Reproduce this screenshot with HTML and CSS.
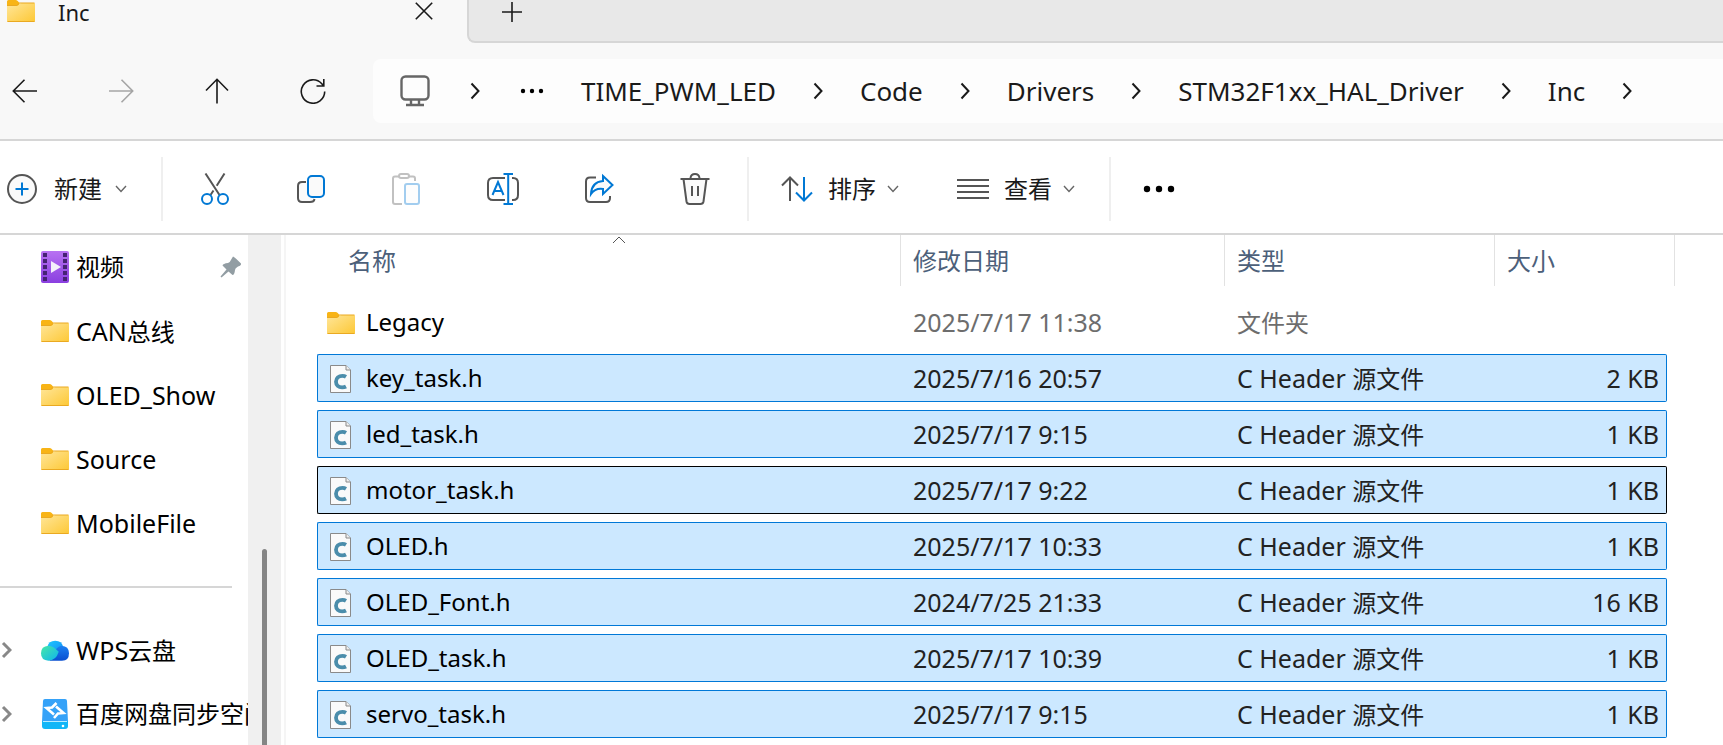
FILE: index.html
```html
<!DOCTYPE html>
<html lang="zh-CN">
<head>
<meta charset="utf-8">
<title>Inc</title>
<link rel="stylesheet" href="styles.css">
</head>
<body>
<svg class="defs" aria-hidden="true">
  <defs>
    <linearGradient id="g-folder" x1="0" y1="0" x2="1" y2="1"><stop offset="0" stop-color="#ffe69a"/><stop offset="1" stop-color="#fdc835"/></linearGradient>
    <linearGradient id="g-video" x1="0" y1="0" x2="0" y2="1"><stop offset="0" stop-color="#b872f2"/><stop offset="1" stop-color="#8a3fe0"/></linearGradient>
    <linearGradient id="g-cloud-l" x1="0" y1="0" x2="1" y2="1"><stop offset="0" stop-color="#45e8a8"/><stop offset="1" stop-color="#0fb4ee"/></linearGradient>
    <linearGradient id="g-cloud-t" x1="0" y1="0" x2="1" y2="1"><stop offset="0" stop-color="#1cc8ff"/><stop offset="1" stop-color="#1487f5"/></linearGradient>
    <linearGradient id="g-cloud-r" x1="0" y1="0" x2="0" y2="1"><stop offset="0" stop-color="#1a80f2"/><stop offset="1" stop-color="#0a4fd0"/></linearGradient>
    <symbol id="folder" viewBox="0 0 28 22">
      <path d="M0 1.500Q0 0 1.500 0H8.500Q9.800 0 10.700 1L12.500 3V8H0Z" fill="#f8b416"/>
      <path d="M0 6H9.500Q10.500 6 11.300 5.200L12.800 3.700Q13.500 3 14.500 3H27Q28 3 28 4V21Q28 22 27 22H1Q0 22 0 21Z" fill="url(#g-folder)"/>
      <path d="M0 5.500H9.500L12.500 3H27.500M.500 21.500H27.500" fill="none" stroke="#eaa921"/>
    </symbol>
    <symbol id="cfile" viewBox="0 0 22 28">
      <path d="M.500 .500H16L20.500 5V27.500H.500Z" fill="#fafafa" stroke="#8a8a8a"/>
      <path d="M16 .500V5H20.500" fill="#eee" stroke="#8a8a8a"/>
      <path d="M16 11.800Q14.600 10.900 12.500 10.900C8.600 10.900 6 13.300 6 16.700C6 20.200 8.400 22.300 12.100 22.300Q14.600 22.300 16 21.500" fill="none" stroke="#4b8dab" stroke-width="3.800"/>
    </symbol>
    <symbol id="next" viewBox="0 0 10 18"><path d="M1.500 1.500L8.500 9L1.500 16.500" fill="none" stroke="currentColor" stroke-width="2"/></symbol>
    <symbol id="expand" viewBox="0 0 11 18"><path d="M2 2L9 9L2 16" fill="none" stroke="#888" stroke-width="3"/></symbol>
    <symbol id="down" viewBox="0 0 12 8"><path d="M1 1L6 6.500L11 1" fill="none" stroke="#666" stroke-width="1.400"/></symbol>
  </defs>
</svg>
<div class="window">
  <header class="tabs">
    <div class="tab">
      <svg class="i-folder"><use href="#folder"/></svg>
      <span class="tab-title">Inc</span>
      <button class="plain" aria-label="关闭"><svg width="18" height="18" viewBox="0 0 18 18"><path d="M.800 .800L17.200 17.200M17.200 .800L.800 17.200" class="ink"/></svg></button>
    </div>
    <div class="strip">
      <button class="plain" aria-label="新建标签页"><svg width="20" height="20" viewBox="0 0 20 20"><path d="M10 0V20M0 10H20" class="ink"/></svg></button>
    </div>
  </header>

  <nav class="address">
    <div class="history">
      <button class="plain" aria-label="后退"><svg width="26" height="26" viewBox="0 0 26 26"><path d="M25 13H1.500M12.500 1.800L1.300 13L12.500 24.200" class="ink"/></svg></button>
      <button class="plain" aria-label="前进" disabled><svg width="26" height="26" viewBox="0 0 26 26"><path d="M1 13H24.500M13.500 1.800L24.700 13L13.500 24.200" class="ink faded"/></svg></button>
      <button class="plain" aria-label="上移"><svg width="26" height="26" viewBox="0 0 26 26"><path d="M13 25.500V1.500M2 12.500L13 1.300L24 12.500" class="ink"/></svg></button>
      <button class="plain" aria-label="刷新"><svg width="26" height="26" viewBox="0 0 26 26"><path d="M24.700 13.500A11.700 11.700 0 1 1 21.800 5.800L23.500 7.800M23.800 1V8H16.500" class="ink"/></svg></button>
    </div>
    <div class="crumbs">
      <svg class="pc" width="30" height="32" viewBox="0 0 30 32"><rect x="1.500" y="1.500" width="27" height="23" rx="4"/><path d="M11 25V29M19 25V29M6 30H24"/></svg>
      <svg class="next first"><use href="#next"/></svg>
      <button class="plain dots" aria-label="更多路径"><svg width="24" height="6" viewBox="0 0 24 6"><circle cx="3" cy="3" r="2.200"/><circle cx="12" cy="3" r="2.200"/><circle cx="21" cy="3" r="2.200"/></svg></button>
      <a href="#">TIME_PWM_LED</a><svg class="next"><use href="#next"/></svg>
      <a href="#">Code</a><svg class="next"><use href="#next"/></svg>
      <a href="#">Drivers</a><svg class="next"><use href="#next"/></svg>
      <a href="#">STM32F1xx_HAL_Driver</a><svg class="next"><use href="#next"/></svg>
      <a href="#">Inc</a><svg class="next"><use href="#next"/></svg>
    </div>
  </nav>

  <div class="toolbar">
    <button class="tool new"><svg width="30" height="30" viewBox="0 0 30 30"><circle cx="15" cy="15" r="14" class="gray tint"/><path d="M15 8.500V21.500M8.500 15H21.500" class="blue"/></svg>新建<svg class="down"><use href="#down"/></svg></button>
    <div class="group">
      <button class="plain" aria-label="剪切"><svg width="32" height="32" viewBox="0 0 32 32"><path d="M6.500 .500L20.500 22M25.500 .500L17.700 12.800M14.500 17.500L11.500 22" class="gray"/><circle cx="8" cy="26" r="5" class="blue"/><circle cx="24" cy="26" r="5" class="blue"/></svg></button>
      <button class="plain" aria-label="复制"><svg width="32" height="32" viewBox="0 0 32 32"><path d="M11 9H7Q3 9 3 13V25Q3 29 7 29H15Q19 29 19.500 26" class="gray tint"/><rect x="13" y="3" width="16" height="21" rx="4" class="blue tint"/></svg></button>
      <button class="plain" aria-label="粘贴" disabled><svg class="dim" width="32" height="32" viewBox="0 0 32 32"><path d="M9 3.500H5Q3 3.500 3 5.500V29Q3 31 5 31H12M19 3.500H23Q25 3.500 25 5.500V8" class="gray"/><rect x="9" y="1" width="10" height="4" rx="2" class="gray"/><rect x="15" y="11" width="14" height="20" rx="2" class="blue tint"/></svg></button>
      <button class="plain" aria-label="重命名"><svg width="34" height="32" viewBox="0 0 34 32"><path d="M19 5H7Q2 5 2 10V22Q2 27 7 27H19M26 5H27Q32 5 32 10V22Q32 27 27 27H26" class="gray"/><path d="M17.500 1H27M17.500 31H27M22.200 1V31M6.500 22L12 9L17.500 22M8.500 18H15.500" class="blue"/></svg></button>
      <button class="plain" aria-label="共享"><svg width="32" height="32" viewBox="0 0 32 32"><path d="M13 4.500H7Q3 4.500 3 8.500V25Q3 29 7 29H23Q27 29 27 25V23" class="gray"/><path d="M20 3L29.500 12L20 21V16Q12 15 8 21Q8.500 9 20 8Z" class="blue tint"/></svg></button>
      <button class="plain" aria-label="删除"><svg width="32" height="32" viewBox="0 0 32 32"><path d="M4.500 6L7.500 28.500Q8 31 10.500 31H21.500Q24 31 24.500 28.500L27.500 6" class="gray tint"/><path d="M1.500 6H30.500M11.500 5Q12 1 16 1T20.500 5M13 13V23M19 13V23" class="gray"/></svg></button>
    </div>
    <button class="tool"><svg width="32" height="26" viewBox="0 0 32 26"><path d="M9 25V1.500M1 9.500L9 1.500L17 9.500" class="gray"/><path d="M23 1V24.500M15 16.500L23 24.500L31 16.500" class="blue"/></svg>排序<svg class="down"><use href="#down"/></svg></button>
    <button class="tool view"><svg width="32" height="22" viewBox="0 0 32 22"><path d="M0 2H32M0 8H32M0 14H32M0 20H32" class="gray"/></svg>查看<svg class="down"><use href="#down"/></svg></button>
    <button class="plain more" aria-label="查看更多"><svg width="32" height="8" viewBox="0 0 32 8"><circle cx="4" cy="4" r="3.200"/><circle cx="16" cy="4" r="3.200"/><circle cx="28" cy="4" r="3.200"/></svg></button>
  </div>

  <div class="main">
    <aside class="side">
      <ul class="tree">
        <li><a href="#"><svg class="ico" viewBox="0 0 28 32"><rect width="28" height="32" rx="2" fill="url(#g-video)"/><path d="M4 2V32M24 2V32" stroke="#452273" stroke-width="4" stroke-dasharray="4 2"/><path d="M10 10L20 16L10 22Z" fill="#f4f0fa"/></svg><span>视频</span><svg class="pin" viewBox="0 0 22 22"><path d="M13 .500Q14 .500 21 7.500Q21.500 9.500 18 10.500Q15 12 15 14Q14.500 19 12.500 19L8.500 15.500L1.500 21.500L.500 20.500L6.500 13.500L2.500 9.500Q3 7.500 8 7Q10 6.500 11.500 3Z" fill="#929da3"/></svg></a></li>
        <li><a href="#"><svg class="i-folder"><use href="#folder"/></svg><span><span class="latin">CAN</span>总线</span></a></li>
        <li><a href="#"><svg class="i-folder"><use href="#folder"/></svg><span class="latin">OLED_Show</span></a></li>
        <li><a href="#"><svg class="i-folder"><use href="#folder"/></svg><span class="latin">Source</span></a></li>
        <li><a href="#"><svg class="i-folder"><use href="#folder"/></svg><span class="latin">MobileFile</span></a></li>
      </ul>
      <hr class="rule">
      <ul class="tree">
        <li><a href="#"><svg class="expand"><use href="#expand"/></svg><svg class="ico" viewBox="0 0 30 32"><path d="M6.500 13A9 9 0 0 1 24 13L20 22H8Z" fill="url(#g-cloud-t)"/><path d="M14 18Q18 12 22 11.500Q30 12 30 19.500Q30 27.500 22.500 27.500H9Z" fill="url(#g-cloud-r)"/><path d="M8 11.500Q13 11.500 19 18Q16 27.500 8 27.500Q0 27 0 19.500T8 11.500Z" fill="url(#g-cloud-l)"/></svg><span><span class="latin">WPS</span>云盘</span></a></li>
        <li><a href="#"><svg class="expand"><use href="#expand"/></svg><svg class="ico" viewBox="0 0 28 32"><path d="M4 1H24Q26 1 26 3L27 24H1L2 3Q2 1 4 1Z" fill="#35a2f8"/><path d="M1 23H27V28Q27 31 24 31H4Q1 31 1 28Z" fill="#11b6f7"/><path d="M2 23.500H26" stroke="#b8ecff"/><circle cx="22" cy="28" r="1.300" fill="#fff"/><path d="M15.500 5L11 9.500L5.500 10L13 16.500M13 20L17 15.500L22.500 15L15 8.500" fill="none" stroke="#fff" stroke-width="2.600"/></svg><span>百度网盘同步空间</span></a></li>
      </ul>
    </aside>
    <div class="scroll"><div class="thumb"></div></div>
    <section class="files">
      <table>
        <colgroup><col class="c-name"><col class="c-date"><col class="c-type"><col class="c-size"></colgroup>
        <thead><tr><th class="h-name">名称<svg class="sort" viewBox="0 0 14 8"><path d="M1 7L7 1L13 7" fill="none" stroke="#555"/></svg></th><th>修改日期</th><th>类型</th><th class="h-size">大小</th></tr></thead>
        <tbody>
          <tr class="dir"><td class="name"><svg class="i-folder"><use href="#folder"/></svg>Legacy</td><td>2025/7/17 11:38</td><td><span class="zh">文件夹</span></td><td></td></tr>
          <tr class="sel"><td class="name"><svg class="i-c"><use href="#cfile"/></svg>key_task.h</td><td>2025/7/16 20:57</td><td>C Header <span class="zh">源文件</span></td><td>2 KB</td></tr>
          <tr class="sel"><td class="name"><svg class="i-c"><use href="#cfile"/></svg>led_task.h</td><td>2025/7/17 9:15</td><td>C Header <span class="zh">源文件</span></td><td>1 KB</td></tr>
          <tr class="sel focus"><td class="name"><svg class="i-c"><use href="#cfile"/></svg>motor_task.h</td><td>2025/7/17 9:22</td><td>C Header <span class="zh">源文件</span></td><td>1 KB</td></tr>
          <tr class="sel"><td class="name"><svg class="i-c"><use href="#cfile"/></svg>OLED.h</td><td>2025/7/17 10:33</td><td>C Header <span class="zh">源文件</span></td><td>1 KB</td></tr>
          <tr class="sel"><td class="name"><svg class="i-c"><use href="#cfile"/></svg>OLED_Font.h</td><td>2024/7/25 21:33</td><td>C Header <span class="zh">源文件</span></td><td>16 KB</td></tr>
          <tr class="sel"><td class="name"><svg class="i-c"><use href="#cfile"/></svg>OLED_task.h</td><td>2025/7/17 10:39</td><td>C Header <span class="zh">源文件</span></td><td>1 KB</td></tr>
          <tr class="sel"><td class="name"><svg class="i-c"><use href="#cfile"/></svg>servo_task.h</td><td>2025/7/17 9:15</td><td>C Header <span class="zh">源文件</span></td><td>1 KB</td></tr>
        </tbody>
      </table>
    </section>
  </div>
</div>
</body>
</html>
```

FILE: styles.css
```css
* { box-sizing: border-box; }
body {
  margin: 0;
  background: #fff;
  color: #000;
  font-family: "Noto Sans", "Noto Sans CJK SC", sans-serif;
  font-size: 24px;
  line-height: 32px;
  overflow: hidden;
}
.defs { position: absolute; width: 0; height: 0; }
svg { display: block; flex: none; }
a { color: inherit; text-decoration: none; }
button {
  font: inherit;
  color: #1a1a1a;
  background: none;
  border: 0;
  padding: 0;
}
.plain { display: flex; align-items: center; justify-content: center; }
.ink { fill: none; stroke: #1a1a1a; stroke-width: 1.6; }
.faded { stroke: #a5a5a5; }
.gray { fill: none; stroke: #555; stroke-width: 2; }
.blue { fill: none; stroke: #0078d4; stroke-width: 2; }
.tint { fill: #fafafa; }
.dim { opacity: 0.36; }
.i-folder { width: 28px; height: 22px; }

.window { display: flex; flex-direction: column; height: 100vh; }

.tabs { display: flex; height: 43px; background: #f8f8f8; }
.tab { display: flex; width: 467px; height: 21px; padding: 0 34px 0 7px; align-items: center; }
.tab-title { flex: 1; padding: 3px 0 0 23px; font-size: 22px; color: #1a1a1a; }
.strip {
  flex: 1;
  display: flex;
  align-items: flex-start;
  padding: 2px 33px;
  background: #e8e8e8;
  border: solid #d6d6d6;
  border-width: 0 0 2px 2px;
  border-bottom-left-radius: 8px;
}

.address {
  display: flex;
  height: 98px;
  padding: 16px 0;
  background: #f8f8f8;
  border-bottom: 2px solid #d6d6d6;
}
.history { display: flex; gap: 70px; width: 373px; padding-left: 12px; align-items: center; }
.crumbs {
  flex: 1;
  display: flex;
  align-items: center;
  gap: 37px;
  padding-left: 27px;
  background: #fdfdfd;
  border-top-left-radius: 8px;
  border-bottom-left-radius: 8px;
  font-size: 26px;
  color: #1a1a1a;
}
.next { width: 10px; height: 18px; }
.first { margin: 0 3px; }
.pc { fill: none; stroke: #666; stroke-width: 2.4; }

.toolbar {
  display: flex;
  align-items: center;
  height: 94px;
  padding-top: 4px;
  border-bottom: 2px solid #d6d6d6;
}
.tool { display: flex; align-items: center; gap: 15px; padding-left: 32px; }
.new { gap: 17px; padding-left: 7px; width: 161px; }
.down { width: 12px; height: 8px; margin-left: -4px; }
.group {
  display: flex;
  justify-content: space-between;
  align-items: center;
  width: 588px;
  height: 64px;
  padding: 0 36px;
  border: solid #efefef;
  border-width: 0 2px;
}
.view { padding-left: 58px; }
.more { height: 64px; margin-left: 34px; padding-left: 32px; border-left: 2px solid #efefef; }

.main { flex: 1; display: flex; min-height: 0; overflow: hidden; }
.side { width: 248px; overflow: hidden; }
.tree { list-style: none; margin: 0; padding: 0; }
.tree a {
  display: flex;
  align-items: center;
  height: 64px;
  padding-left: 41px;
  gap: 7px;
  white-space: nowrap;
  position: relative;
}
.latin { font-size: 25px; }
.ico { width: 28px; height: 32px; }
.pin { width: 22px; height: 22px; margin-left: auto; margin-right: 6px; }
.expand { position: absolute; left: 1px; width: 11px; height: 18px; }
.rule { height: 2px; margin: 31px 16px 30px 0; border: 0; background: #d6d6d6; }
.scroll { width: 38px; padding: 314px 0 0 14px; background: linear-gradient(90deg, #f0f0f0 33px, #fff 33px, #fff 36px, #f5f5f5 36px); }
.thumb { width: 5px; height: 100%; border-radius: 3px 3px 0 0; background: #858585; }

.files { flex: 1; padding-left: 31px; }
table { width: 1350px; max-width: 100%; table-layout: fixed; border-collapse: separate; border-spacing: 0 8px; margin-top: -8px; }
.c-name { width: 584px; }
.c-date { width: 324px; }
.c-type { width: 270px; }
th {
  height: 51px;
  padding: 0 0 0 12px;
  font-weight: 400;
  text-align: left;
  color: #4c607a;
  border-right: 1px solid #e2e2e2;
}
.h-name { position: relative; padding-left: 31px; }
.h-size { position: relative; border-right: 0; }
.h-size::after { content: ""; position: absolute; top: 0; bottom: 0; right: -8px; border-right: 1px solid #e2e2e2; }
.sort { position: absolute; left: 295px; top: 1px; width: 14px; height: 8px; }
td { height: 48px; padding: 0 0 0 12px; font-size: 25px; color: #222; white-space: nowrap; }
td svg { display: inline-block; vertical-align: middle; }
td .i-folder { margin: -4px 11px 0 10px; }
td .i-c { width: 22px; height: 28px; margin: -4px 14px 0 12px; }
td:last-child { text-align: right; padding-right: 7px; }
.dir td { height: 52px; padding-top: 4px; color: #6d6d6d; }
td.name, .dir td.name { padding-left: 0; font-size: 24px; color: #000; }
.zh { font-size: 24px; }
.sel td { background: #cce8ff; border: solid #0078d7; border-width: 1px 0; }
.sel td:first-child { border-left-width: 1px; border-radius: 2px 0 0 2px; }
.sel td:last-child { border-right-width: 1px; border-radius: 0 2px 2px 0; }
.sel.focus td { border-color: #000; }
```
